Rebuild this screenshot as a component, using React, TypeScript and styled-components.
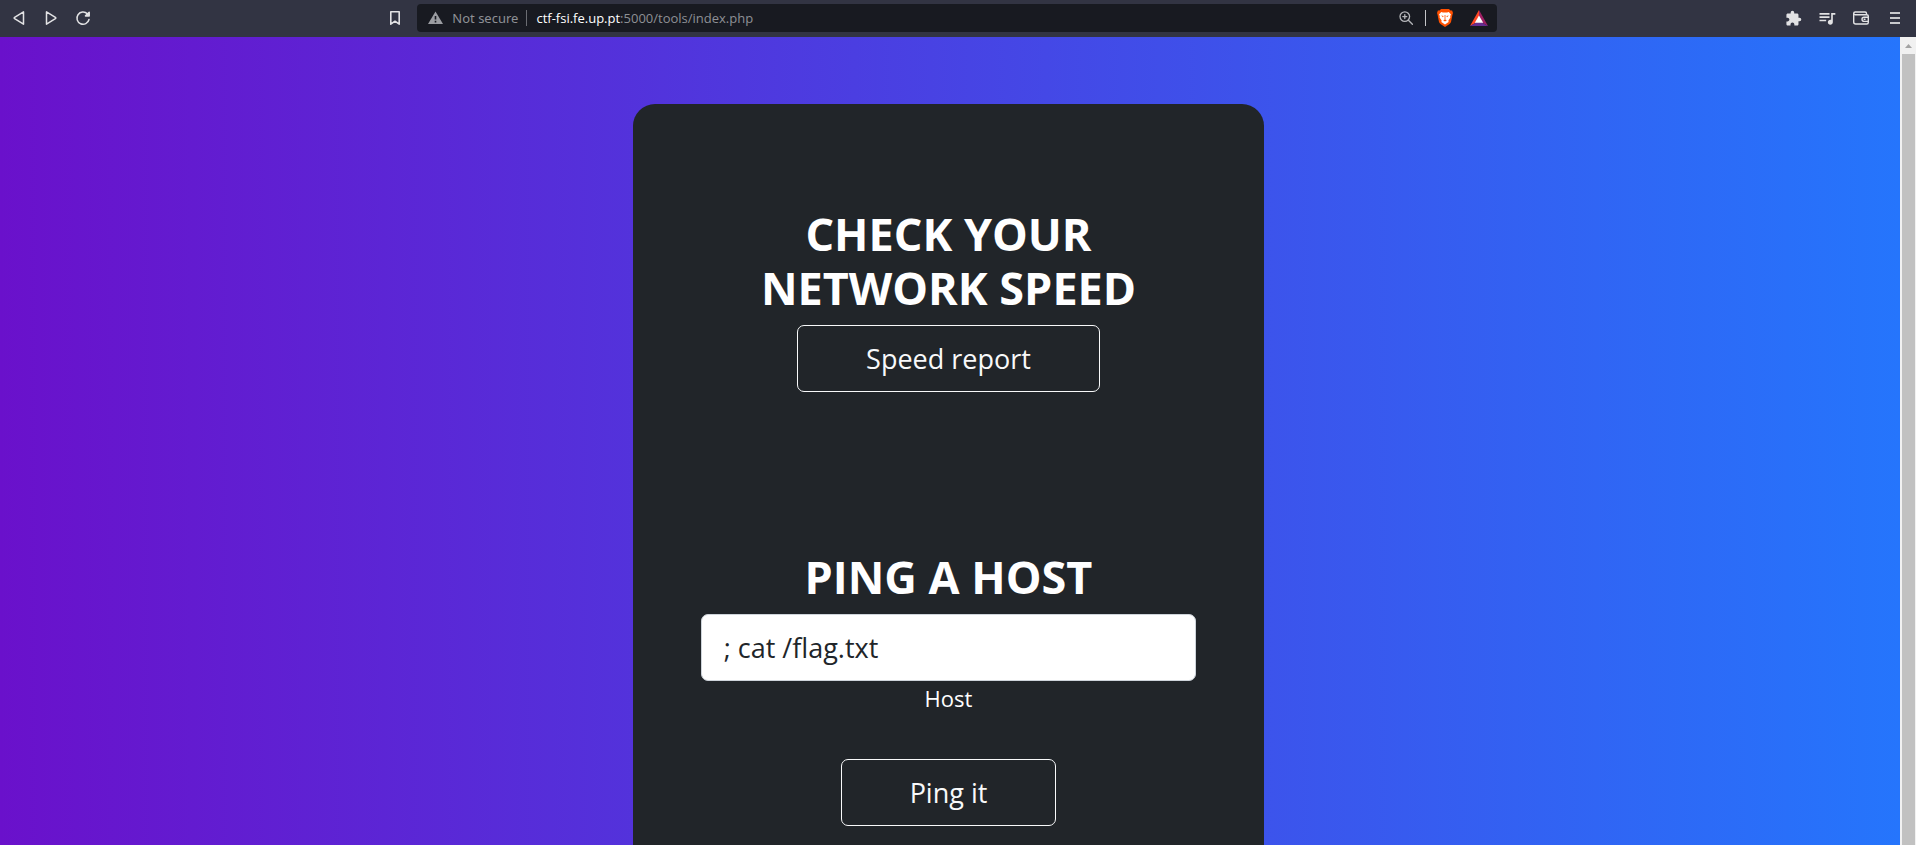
import React from "react";
import styled, { createGlobalStyle } from "styled-components";
import { MdExtension, MdQueueMusic } from "react-icons/md";

const GlobalStyle = createGlobalStyle`
  *, *::before, *::after { box-sizing: border-box; }
  html, body { margin: 0; }
  body { font-family: "Open Sans", "Noto Sans", sans-serif; overflow: hidden; }
`;

const Window = styled.div`
  display: flex;
  flex-direction: column;
  height: 100vh;
`;

const Toolbar = styled.header`
  display: grid;
  grid-template-columns: 12fr 1110px 13fr;
  align-items: center;
  flex: none;
  height: 37px;
  padding: 0 11px 1px;
  background: #323443;
  color: #e2e2e4;
`;

const ToolGroup = styled.div<{ $end?: boolean }>`
  display: flex;
  align-items: center;
  gap: ${(p) => (p.$end ? 14 : 16)}px;
  justify-content: ${(p) => (p.$end ? "flex-end" : "flex-start")};
`;

const IconButton = styled.button<{ $wide?: boolean }>`
  display: flex;
  flex: none;
  align-items: center;
  justify-content: center;
  width: ${(p) => (p.$wide ? 20 : 16)}px;
  height: 20px;
  padding: 0;
  border: 0;
  background: none;
  color: inherit;
`;

const AddressArea = styled.div`
  display: flex;
  align-items: center;
  gap: 14px;
`;

const AddressBar = styled.div`
  display: flex;
  flex: 1;
  align-items: center;
  height: 28px;
  padding: 0 8px 0 10px;
  border-radius: 4px;
  background: #181a21;
  font-size: 13px;
  line-height: 20px;
  color: #8e9095;
`;

const Security = styled.span`
  display: flex;
  align-items: center;
  gap: 8px;
  font-family: "Noto Sans", sans-serif;
`;

const Divider = styled.span<{ $bright?: boolean }>`
  width: 1px;
  height: 16px;
  margin: 0 9px 0 ${(p) => (p.$bright ? 11 : 8)}px;
  background: ${(p) => (p.$bright ? "#c4c5c8" : "#6a6c72")};
`;

const Url = styled.span`
  flex: 1;
`;

const Domain = styled.span`
  color: #ffffff;
`;

const BarIcons = styled.div`
  display: flex;
  align-items: center;
  color: #b4b5b9;
`;

const Shields = styled.div`
  display: flex;
  gap: 14px;
`;

const Viewport = styled.div`
  display: flex;
  flex: 1;
  min-height: 0;
`;

const Page = styled.main`
  display: flex;
  flex: 1;
  justify-content: center;
  align-items: flex-start;
  overflow: hidden;
  padding: 67px 3px 67px 0;
  background: linear-gradient(to right, #6a11cb, #2575fc);
`;

const Card = styled.div`
  display: flex;
  flex-direction: column;
  gap: 158px;
  width: 33.3%;
  min-width: 500px;
  padding: 103px 68px;
  border-radius: 22px;
  background: #212529;
  color: #ffffff;
`;

const Section = styled.section`
  display: flex;
  flex-direction: column;
  align-items: center;
`;

const PingForm = styled.form`
  display: flex;
  flex-direction: column;
  align-items: center;
  width: 100%;
`;

const Title = styled.h2`
  margin: 0 0 10px;
  font-size: 45px;
  font-weight: 700;
  line-height: 54px;
  text-align: center;
  text-transform: uppercase;
`;

const OutlineButton = styled.button`
  height: 67px;
  padding: 0 68px;
  border: 1px solid #f8f9fa;
  border-radius: 7px;
  background: transparent;
  color: #f8f9fa;
  font: inherit;
  font-size: 27px;
  line-height: 42px;
`;

const HostInput = styled.input`
  width: 100%;
  height: 67px;
  padding: 0 22px;
  border: 1px solid #ced4da;
  border-radius: 7px;
  background: #ffffff;
  color: #212529;
  font: inherit;
  font-size: 27px;
`;

const HostLabel = styled.label`
  margin-bottom: 44px;
  font-size: 22px;
  line-height: 34px;
`;

const Scrollbar = styled.div`
  display: flex;
  flex-direction: column;
  flex: none;
  width: 16px;
  padding: 0 1px 0 2px;
  background: #f1f1f1;
`;

const ScrollArrow = styled.div`
  display: flex;
  align-items: center;
  justify-content: center;
  height: 17px;
`;

const ScrollThumb = styled.div`
  flex: 1;
  background: #c1c1c1;
`;

const outline = {
  fill: "none",
  stroke: "currentColor",
  strokeLinejoin: "round" as const,
  strokeLinecap: "round" as const,
};

export default function App() {
  return (
    <>
      <GlobalStyle />
      <Window>
        <Toolbar>
          <ToolGroup>
            <IconButton aria-label="Back">
              <svg width="16" height="16" viewBox="0 0 16 16" {...outline} strokeWidth="1.5">
                <path d="M12.500 1.800v12.400L3.600 8.600q-.8-.6 0-1.200z" />
              </svg>
            </IconButton>
            <IconButton aria-label="Forward">
              <svg width="16" height="16" viewBox="0 0 16 16" {...outline} strokeWidth="1.5">
                <path d="M3.500 1.800v12.400l8.900-5.600q.8-.6 0-1.200z" />
              </svg>
            </IconButton>
            <IconButton aria-label="Reload">
              <svg width="16" height="16" viewBox="0 0 16 16" {...outline} strokeWidth="1.5">
                <path d="M12.400 3.900A6.100 6.100 0 1 0 14 9.500" />
                <path d="M14.200 2.200v3.700h-3.700z" fill="currentColor" />
              </svg>
            </IconButton>
          </ToolGroup>
          <AddressArea>
            <IconButton aria-label="Bookmark">
              <svg width="16" height="16" viewBox="0 0 16 16" {...outline} strokeWidth="1.6">
                <path d="M3.800 1.800h8.400v12.400L8 11.200l-4.200 3z" />
              </svg>
            </IconButton>
            <AddressBar>
              <Security>
                <svg width="17" height="16" viewBox="0 0 17 16">
                  <path d="M8.500 1.500 16 14H1z" fill="#9b9da2" />
                  <path d="M7.700 6h1.600v3.600H7.700zM7.700 10.800h1.600v1.600H7.700z" fill="#181a21" />
                </svg>
                Not secure
              </Security>
              <Divider />
              <Url>
                <Domain>ctf-fsi.fe.up.pt</Domain>:5000/tools/index.php
              </Url>
              <BarIcons>
                <IconButton aria-label="Zoom">
                  <svg width="16" height="16" viewBox="0 0 16 16" {...outline} strokeWidth="1.3">
                    <circle cx="6.800" cy="6.600" r="4.800" />
                    <path d="M10.400 10.200 14.400 14.200M4.800 6.600h4M6.800 4.600v4" />
                  </svg>
                </IconButton>
                <Divider $bright />
                <Shields>
                  <IconButton aria-label="Shields" $wide>
                    <svg width="18" height="20" viewBox="0 0 18 20">
                      <path d="M5 1h8l1.400 1.500 1.700-.1L17 5l-.5 1.500L15 14q-.4 1.200-1.500 2L9 19l-4.500-3Q3.400 15.200 3 14L1.500 6.500 1 5l.9-2.600 1.700.1z" fill="#ff5000" />
                      <path d="M5.200 4 7 4.500h4l1.800-.5 2.200 2.500-.8 1.500.2 1.500-2 3 .2 1.500L9 16.500 5.400 14l.2-1.500-2-3L3.800 8 3 6.500z" fill="#fff" />
                      <path d="m5.200 7.500 2.400.6L7 9.300zM12.800 7.500l-2.400.6.6 1.200zM8.600 7h.8v4h-.8zM7.200 12.200 9 11.300l1.800.9L9 13.500z" fill="#ff5000" />
                    </svg>
                  </IconButton>
                  <IconButton aria-label="Rewards" $wide>
                    <svg width="20" height="18" viewBox="0 0 20 18">
                      <path d="M10 1 1 17l9-5z" fill="#ff4724" />
                      <path d="m10 1 9 16-9-5z" fill="#9e1f63" />
                      <path d="M1 17h18l-9-5z" fill="#662d91" />
                      <path d="m10 6.500 4.200 7.300H5.800z" fill="#fff" />
                    </svg>
                  </IconButton>
                </Shields>
              </BarIcons>
            </AddressBar>
          </AddressArea>
          <ToolGroup $end>
            <IconButton aria-label="Extensions" $wide>
              <MdExtension size={17} />
            </IconButton>
            <IconButton aria-label="Media" $wide>
              <MdQueueMusic size={20} />
            </IconButton>
            <IconButton aria-label="Wallet" $wide>
              <svg width="18" height="16" viewBox="0 0 18 16" {...outline} strokeWidth="1.4">
                <path d="M14.500 4.700V3.400q0-1.400-1.400-1.400H3.200Q1.700 2 1.700 3.300T3.200 4.700h11.600q1.500 0 1.500 1.400v6.400q0 1.500-1.500 1.500H3.700q-2 0-2-2V3.300" />
                <path d="M16.300 7.200h-4.200a2.100 2.100 0 0 0 0 4.200h4.200M12.200 9.300h.8" />
              </svg>
            </IconButton>
            <IconButton aria-label="Menu" $wide>
              <svg width="16" height="16" viewBox="0 0 16 16" fill="#c9cacd">
                <path d="M3 2h10v2H3zM3 7h10v2H3zM3 12h10v2H3z" />
              </svg>
            </IconButton>
          </ToolGroup>
        </Toolbar>
        <Viewport>
          <Page>
            <Card>
              <Section>
                <Title>Check your network speed</Title>
                <OutlineButton type="button">Speed report</OutlineButton>
              </Section>
              <Section>
                <Title>Ping a host</Title>
                <PingForm onSubmit={(e) => e.preventDefault()}>
                  <HostInput id="host" type="text" defaultValue="; cat /flag.txt" />
                  <HostLabel htmlFor="host">Host</HostLabel>
                  <OutlineButton type="submit">Ping it</OutlineButton>
                </PingForm>
              </Section>
            </Card>
          </Page>
          <Scrollbar>
            <ScrollArrow>
              <svg width="7" height="4" viewBox="0 0 7 4">
                <path d="M3.500 0 7 4H0z" fill="#a3a3a3" />
              </svg>
            </ScrollArrow>
            <ScrollThumb />
          </Scrollbar>
        </Viewport>
      </Window>
    </>
  );
}
